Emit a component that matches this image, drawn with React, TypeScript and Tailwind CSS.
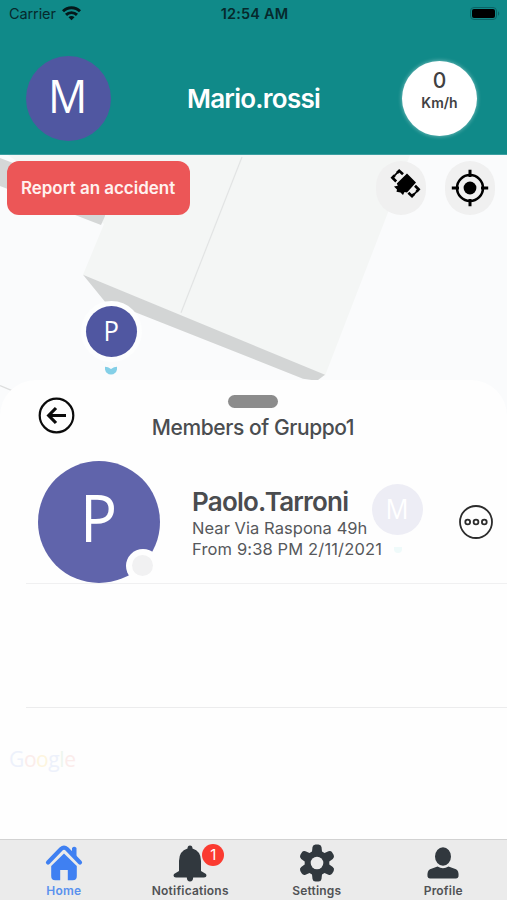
import React from 'react';

interface AvatarProps {
  letter: string;
  className: string;
}

const Avatar: React.FC<AvatarProps> = ({ letter, className }) => (
  <div className={`flex shrink-0 items-center justify-center rounded-full font-['Open_Sans',sans-serif] leading-none text-white ${className}`}>
    <span className="scale-x-95">{letter}</span>
  </div>
);

const StatusBar: React.FC = () => (
  <div className="flex h-[28px] items-center justify-between pl-[9px] pr-[7px] text-[#06292c]">
    <div className="flex w-[120px] items-center gap-[6px]">
      <span className="text-[14.5px] tracking-[-0.1px]">Carrier</span>
      <svg className="-mt-[2px] h-[15px] w-[19px]" viewBox="0 0 19 15" fill="none" stroke="#04181a" strokeWidth="2.9">
        <path d="M1 5.3a12 12 0 0 1 17 0" />
        <path d="M4 8.9a7.8 7.8 0 0 1 11 0" />
        <path d="M9.5 14.3 6.5 11.2a4.1 4.1 0 0 1 6 0z" fill="#04181a" stroke="none" />
      </svg>
    </div>
    <span className="text-[14.5px] font-semibold tracking-[0.2px]">12:54 AM</span>
    <div className="flex w-[120px] justify-end">
      <svg className="-mt-px h-[13px] w-[30px]" viewBox="0 0 30 13">
        <rect x="0.5" y="0.5" width="26" height="12" rx="3.5" fill="none" stroke="#0a6466" />
        <rect x="2" y="2" width="23" height="9" rx="2" fill="#000" />
        <path d="M28 4.2c1.6.8 1.6 3.8 0 4.6z" fill="#0a6466" />
      </svg>
    </div>
  </div>
);

const Header: React.FC = () => (
  <header className="h-[155px] shrink-0 border-b border-[#3c9fa1] bg-[#108a89]">
    <StatusBar />
    <div className="flex items-center justify-between pl-[26px] pr-[30px] pt-[28px]">
      <Avatar letter="M" className="h-[85px] w-[85px] bg-[#5057a1] pb-[7px] pr-[2px] text-[46px]" />
      <h1 className="mr-[6px] whitespace-nowrap text-[26px] font-semibold tracking-[-0.75px] text-white">Mario.rossi</h1>
      <div className="flex h-[75px] w-[75px] flex-col items-center rounded-full bg-white pt-[9px] text-[#3f4142] shadow-[0_0_4px_rgba(255,255,255,0.5)]">
        <span className="text-[21px] font-medium leading-[22px]">0</span>
        <span className="text-[14px] font-semibold leading-[21px]">Km/h</span>
      </div>
    </div>
  </header>
);

const MapBackground: React.FC = () => (
  <svg className="absolute inset-0 h-full w-full" viewBox="0 155 507 685" preserveAspectRatio="none">
    <rect y="155" width="507" height="685" fill="#fafbfc" />
    <path d="M8 155H410L387 215 325 376 83 275 104 224z" fill="#f4f6f5" />
    <path d="M0 158 105 198V216L101 225 0 186z" fill="#d5d7d7" />
    <path d="M83 275 325 375 317 381 303 379 134 312 105 302z" fill="#d3d5d5" />
    <path d="M242 157 181 313" stroke="#e2e4e4" strokeWidth="1.2" />
    <path d="M0 386 12 391" stroke="#dcdddd" strokeWidth="1.3" />
  </svg>
);

const MapControls: React.FC = () => (
  <div className="relative flex items-start justify-between pl-[7px] pr-[12px] pt-[6px]">
    <button className="h-[54px] w-[183px] rounded-[12px] bg-[#ec5657] pr-px pt-px text-[17px] font-semibold tracking-[-0.03px] text-[#fff1ef]">
      Report an accident
    </button>
    <div className="flex gap-[19px]">
      <button className="flex h-[54px] w-[50px] justify-center rounded-full bg-[#f0f0f0] pl-[5px] pt-[8px]">
        <svg className="h-[30px] w-[30px] shrink-0 overflow-visible" viewBox="0 0 30 30">
          <path d="M18 4.5 27 13.5 18 23.5 15.5 23 14 26 11.5 23.5 7.5 22.8 8 20.5 5 17.5 8.8 16.8 7.8 14.5z" fill="#000" />
          <path d="M7.2 12.5 3.4 8.8 5.6 6.4M8 4 10.2 1.8 14 5.2M26 16.8 29.6 20.4 27.6 22.6M25.2 24.9 23 27.2 19.4 23.8" fill="none" stroke="#000" strokeWidth="2.7" />
          <path d="M5 7.2 9 3M28.2 22 24.2 26.2" stroke="#000" strokeWidth="1.8" />
        </svg>
      </button>
      <button className="flex h-[54px] w-[50px] items-center justify-center rounded-full bg-[#f0f0f0]">
        <svg className="h-[38px] w-[38px]" viewBox="0 0 38 38">
          <circle cx="19" cy="19" r="13" fill="none" stroke="#000" strokeWidth="2.5" />
          <circle cx="19" cy="19" r="6.4" fill="#000" />
          <path d="M19 .8V8M19 30v7.2M.8 19H8M30 19h7.2" stroke="#000" strokeWidth="3" />
        </svg>
      </button>
    </div>
  </div>
);

const MapPin: React.FC = () => (
  <div className="absolute left-[81px] top-[146px] flex w-[60px] flex-col items-center">
    <div className="rounded-full bg-[#fdfefe] p-[5px]">
      <Avatar letter="P" className="h-[51px] w-[51px] bg-[#5057a1] pb-[3px] text-[27px]" />
    </div>
    <svg className="mt-[4px] h-[9px] w-[12px]" viewBox="0 0 12 9">
      <path d="M0 .8Q3 .8 6 3Q9 .8 12 .8V3.4Q11 8 6 8.6Q1 8 0 3.4z" fill="#83cfe7" />
    </svg>
  </div>
);

const MembersSheet: React.FC = () => (
  <section className="relative mt-[165px] flex-1 rounded-t-[36px] bg-[#fefefe]">
    <div className="flex h-[76px] items-start px-[38px]">
      <svg className="mt-[17px] h-[37px] w-[37px] shrink-0" viewBox="0 0 37 37" fill="none" stroke="#0b0b0b">
        <circle cx="18.5" cy="18.5" r="16.8" strokeWidth="2.2" />
        <path d="M28 18.5H12M18 11 10.7 18.5 18 26" strokeWidth="3.2" />
      </svg>
      <div className="flex flex-1 flex-col items-center pr-[38px]">
        <div className="mt-[15px] h-[13px] w-[50px] rounded-full bg-[#8c8c8c]" />
        <h2 className="mt-[6px] text-[21px] font-medium leading-[28px] tracking-[-0.42px] text-[#4a4d50]">Members of Gruppo1</h2>
      </div>
    </div>

    <div className="ml-[26px] flex h-[128px] items-end border-b border-[#f0f0f1] pl-[12px] pr-[14px]">
      <div className="relative">
        <Avatar letter="P" className="h-[122px] w-[122px] bg-[#6064ab] pb-[10px] text-[65px]" />
        <div className="absolute bottom-0 right-0 h-[34px] w-[34px] rounded-full bg-[#fefefe] p-[6px]">
          <div className="h-[21px] w-[21px] rounded-full bg-[#f1f1f2]" />
        </div>
      </div>
      <div className="ml-[32px] mb-[23px] flex-1 text-[#56585b]">
        <h3 className="text-[26px] font-semibold leading-[32px] tracking-[-0.78px] text-[#4a4c4f]">Paolo.Tarroni</h3>
        <p className="whitespace-nowrap text-[16.5px] leading-[21px] tracking-[0.05px]">Near Via Raspona 49h</p>
        <p className="whitespace-nowrap text-[16.5px] leading-[21px] tracking-[0.14px]">From 9:38 PM 2/11/2021</p>
      </div>
      <svg className="mb-[44px] h-[34px] w-[34px]" viewBox="0 0 34 34" fill="none" stroke="#2c2c2c">
        <circle cx="17" cy="17" r="16" strokeWidth="1.8" />
        <circle cx="8.7" cy="17" r="2.4" strokeWidth="1.8" />
        <circle cx="17" cy="17" r="2.4" strokeWidth="1.8" />
        <circle cx="25.3" cy="17" r="2.4" strokeWidth="1.8" />
      </svg>
    </div>
    <div className="ml-[26px] h-[124px] border-b border-[#ececed]" />

    {/* Map marker faintly visible through the sheet */}
    <div className="absolute left-[372px] top-[104px] flex flex-col items-center">
      <Avatar letter="M" className="h-[51px] w-[51px] bg-[#ededf5] pb-[2px] text-[27px]" />
      <div className="mt-[12px] h-[6px] w-[8px] rounded-b-full bg-[#effafa]" />
    </div>

    <div className="pl-[9px] pt-[37px] font-['Open_Sans',sans-serif] text-[21px] leading-[28px] tracking-[-0.4px]">
      <span className="text-[#edf1fb]">G</span>
      <span className="text-[#fbeceb]">o</span>
      <span className="text-[#fdf5df]">o</span>
      <span className="text-[#edf1fb]">g</span>
      <span className="text-[#eef6ee]">l</span>
      <span className="text-[#fbeceb]">e</span>
    </div>
  </section>
);

const HomeIcon = () => (
  <svg className="-mt-px h-[36px] w-[38px] overflow-visible" viewBox="0 0 38 36" fill="#3f80f2">
    <path d="M3 17.5 16 4Q19 1.2 22 4L35 17.5" fill="none" stroke="#3f80f2" strokeWidth="4.2" strokeLinecap="round" />
    <path d="M27 3Q29.3.4 31.5 3V14.5L27 10z" />
    <path d="M19 8.5 31.8 21V31Q31.8 35.3 27.8 35.3H22.8V25H15.2V35.3H10.2Q6.2 35.3 6.2 31V21z" />
  </svg>
);

const BellIcon = () => (
  <svg className="-mt-px h-[37px] w-[34px]" viewBox="0 0 34 37" fill="#31383e">
    <path d="M14.5 3.5Q14.5.5 17 .5T19.5 3.5Q28 6 28 16V26L33 29Q34.5 32.5 31 32.5H20.2Q20 36.5 17 36.5T13.8 32.5H3Q-.5 32.5 1 29L6 26V16Q6 6 14.5 3.5z" />
  </svg>
);

const GearIcon = () => (
  <svg className="-mt-px h-[38px] w-[36px]" viewBox="-18 -19 36 38" fill="#31383e">
    <path d="M-4.5-16Q-4-18.5-1.5-18.5H1.5Q4-18.5 4.5-16L5-11.5 7.5-10 11.5-11.8Q14-12.5 15.2-10.5L16.7-8Q17.8-5.5 15.8-4L12.3-1.5V1.5L15.8 4Q17.8 5.5 16.7 8L15.2 10.5Q14 12.5 11.5 11.8L7.5 10 5 11.5 4.5 16Q4 18.5 1.5 18.5H-1.5Q-4 18.5-4.5 16L-5 11.5-7.5 10-11.5 11.8Q-14 12.5-15.2 10.5L-16.7 8Q-17.8 5.5-15.8 4L-12.3 1.5V-1.5L-15.8-4Q-17.8-5.5-16.7-8L-15.2-10.5Q-14-12.5-11.5-11.8L-7.5-10-5-11.5z" />
    <circle r="6.3" fill="#ebebeb" />
  </svg>
);

const ProfileIcon = () => (
  <svg className="-mt-px h-[32px] w-[32px]" viewBox="0 0 32 32" fill="#31383e">
    <ellipse cx="16" cy="9.5" rx="8" ry="9.3" />
    <path d="M10.5 19.5Q16 22.8 21.5 19.5L29 22.3Q32 23.8 31.5 29.5Q31 31.5 29 31.5H3Q1 31.5.5 29.5Q0 23.8 3 22.3z" />
  </svg>
);

interface Tab {
  label: string;
  icon: React.ReactNode;
  active?: boolean;
  badge?: number;
}

const tabs: Tab[] = [
  { label: 'Home', icon: <HomeIcon />, active: true },
  { label: 'Notifications', icon: <BellIcon />, badge: 1 },
  { label: 'Settings', icon: <GearIcon /> },
  { label: 'Profile', icon: <ProfileIcon /> },
];

const TabBar: React.FC = () => (
  <nav className="flex h-[61px] shrink-0 border-t border-[#d2d2d2] bg-[#ebebeb] pr-px">
    {tabs.map((tab) => (
      <div key={tab.label} className="flex flex-1 flex-col items-center pl-px">
        <div className="relative mt-[4px] flex h-[39px] items-center">
          {tab.icon}
          {tab.badge && (
            <span className="absolute left-[29px] top-0 flex h-[22px] w-[22px] items-center justify-center rounded-full bg-[#fb3b31] text-[15px] text-white">
              {tab.badge}
            </span>
          )}
        </div>
        <span className={`text-[12px] font-semibold leading-[16px] tracking-[0.2px] ${tab.active ? 'text-[#5a91ee]' : 'text-[#505255]'}`}>
          {tab.label}
        </span>
      </div>
    ))}
  </nav>
);

export default function App() {
  return (
    <div className="flex h-[900px] w-full flex-col overflow-hidden bg-white font-['Inter',sans-serif]">
      <Header />
      <main className="relative flex flex-1 flex-col">
        <MapBackground />
        <MapControls />
        <MapPin />
        <MembersSheet />
      </main>
      <TabBar />
    </div>
  );
}
